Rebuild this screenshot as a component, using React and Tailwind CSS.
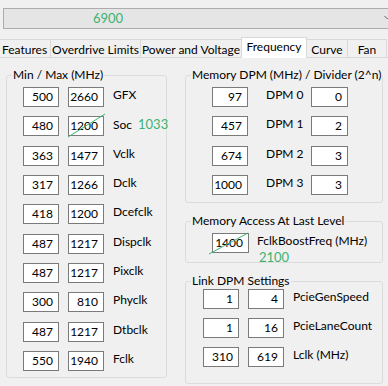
import React from "react";

const GREEN = "#3cb371";

function Box({ v, w = "w-[36px]", strike, strikeB }) {
  return (
    <div className={`relative ${w} h-[20px] shrink-0 border border-[#7a7a7a] bg-white flex items-center justify-end pr-[5px] text-[12px] leading-none text-black`}>
      {v}
      {strike && (
        <svg className="absolute left-[-1px] top-[-4px] overflow-visible" width="38" height="25">
          <line x1="0" y1="24" x2="37" y2="1" stroke={GREEN} strokeWidth="1" />
        </svg>
      )}
      {strikeB && (
        <svg className="absolute left-[-4px] top-[-1px] overflow-visible" width="42" height="22">
          <line x1="0" y1="21" x2="39" y2="0" stroke={GREEN} strokeWidth="1" />
        </svg>
      )}
    </div>
  );
}

function Group({ title, className, children }) {
  return (
    <fieldset className={`border border-[#dcdcdc] rounded-[3px] p-0 m-0 min-w-0 ${className}`}>
      <legend className="ml-[5px] px-[1px] text-[12px] leading-[16px] text-black">{title}</legend>
      {children}
    </fieldset>
  );
}

const leftRows = [
  ["500", "2660", "GFX"],
  ["480", "1200", "Soc"],
  ["363", "1477", "Vclk"],
  ["317", "1266", "Dclk"],
  ["418", "1200", "Dcefclk"],
  ["487", "1217", "Dispclk"],
  ["487", "1217", "Pixclk"],
  ["300", "810", "Phyclk"],
  ["487", "1217", "Dtbclk"],
  ["550", "1940", "Fclk"],
];

const dpmRows = [
  ["97", "DPM 0", "0"],
  ["457", "DPM 1", "2"],
  ["674", "DPM 2", "3"],
  ["1000", "DPM 3", "3"],
];

const linkRows = [
  ["1", "4", "PcieGenSpeed"],
  ["1", "16", "PcieLaneCount"],
  ["310", "619", "Lclk (MHz)"],
];

export default function App() {
  return (
    <div className="w-[388px] h-[386px] bg-[#f0f0f0] overflow-hidden font-['Lato',sans-serif] text-[12px] text-black whitespace-nowrap pt-[8px]">
      {/* combo */}
      <div className="ml-[3px] w-[400px] h-[21px] border border-[#acacac] bg-[#e5e5e5] flex items-center relative">
        <span className="ml-[89px] text-[13px] leading-none" style={{ color: GREEN }}>6900</span>
        <svg className="absolute left-[380px] top-[6px]" width="8" height="6">
          <polyline points="0.5,1 3.5,4 6.5,1" fill="none" stroke="#606060" strokeWidth="1" />
        </svg>
      </div>

      {/* tabs */}
      <div className="mt-[8px] h-[20px] flex items-end">
        <div className="w-[51px] h-[18px] border-t border-r border-[#d9d9d9] flex items-center pl-[2px] pt-[2px]">Features</div>
        <div className="w-[90px] h-[18px] border-t border-r border-[#d9d9d9] flex items-center justify-center pt-[2px]">Overdrive Limits</div>
        <div className="w-[100px] h-[18px] border-t border-[#d9d9d9] flex items-center justify-center pt-[2px]">Power and Voltage</div>
        <div className="relative z-10 w-[66px] h-[21px] mb-[-1px] border-t border-l border-r border-[#d9d9d9] bg-white flex items-center justify-center pb-[2px]">Frequency</div>
        <div className="w-[41px] h-[18px] border-t border-r border-[#d9d9d9] flex items-center justify-center pt-[2px]">Curve</div>
        <div className="w-[39px] h-[18px] border-t border-r border-[#d9d9d9] flex items-center justify-center pt-[2px]">Fan</div>
      </div>

      {/* panel */}
      <div className="border-t border-[#d9d9d9] h-[330px] flex pl-[6px]">
        {/* left */}
        <Group title="Min / Max (MHz)" className="mt-[9px] w-[161px] h-[311px]">
          <div className="pt-[4px] pl-[16px] flex flex-col gap-[9.33px]">
            {leftRows.map(([a, b, l], i) => (
              <div key={i} className="flex items-start gap-[9px]">
                <Box v={a} />
                <Box v={b} strike={i === 1} />
                <div className="leading-[16px] flex items-baseline">
                  <span>{l}</span>
                  {i === 1 && (
                    <span className="ml-[6px] text-[13px]" style={{ color: GREEN }}>1033</span>
                  )}
                </div>
              </div>
            ))}
          </div>
        </Group>

        {/* right */}
        <div className="ml-[18px] w-[198px] flex flex-col">
          <Group title="Memory DPM (MHz) / Divider (2^n)" className="mt-[9px] h-[136px]">
            <div className="pt-[4px] pl-[26px] flex flex-col gap-[9.33px]">
              {dpmRows.map(([a, l, b], i) => (
                <div key={i} className="flex items-start">
                  <Box v={a} />
                  <div className="ml-[18px] w-[45px] leading-[16px]">{l}</div>
                  <Box v={b} w="w-[37px]" />
                </div>
              ))}
            </div>
          </Group>

          <Group title="Memory Access At Last Level" className="relative mt-[10px] h-[50px]">
            <div className="pt-[4px] pl-[26px] flex items-start">
              <Box v="1400" w="w-[37px]" strikeB />
              <div className="ml-[8px] leading-[16px]">FclkBoostFreq (MHz)</div>
            </div>
            <span className="absolute left-[73px] top-[20px] text-[13px] leading-[16px]" style={{ color: GREEN }}>2100</span>
          </Group>

          <Group title="Link DPM Settings" className="mt-[10px] h-[111px]">
            <div className="pt-[0px] pl-[17px] flex flex-col gap-[9px]">
              {linkRows.map(([a, b, l], i) => (
                <div key={i} className="flex items-start gap-[9px]">
                  <Box v={a} />
                  <Box v={b} />
                  <div className="leading-[16px]">{l}</div>
                </div>
              ))}
            </div>
          </Group>
        </div>
      </div>
    </div>
  );
}
